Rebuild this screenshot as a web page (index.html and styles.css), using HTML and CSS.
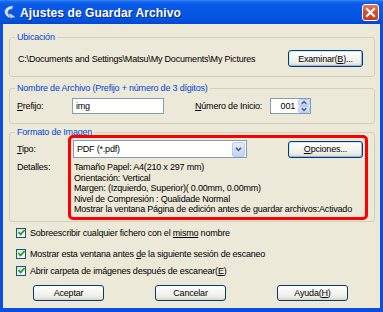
FILE: index.html
```html
<!DOCTYPE html>
<html lang="es">
<head>
<meta charset="utf-8">
<title>Ajustes de Guardar Archivo</title>
<link rel="stylesheet" href="styles.css">
</head>
<body>
<div class="window">
  <div class="titlebar">
    <svg class="appicon" viewBox="0 0 13 14" width="13" height="14">
      <path d="M10 1 C5 1 1 4 2 8 C2.5 10 4 11 5 12 L8 13 L5 9 C4 6 6 4 9 4 Z" fill="#e8ecf4" stroke="#8a97b5" stroke-width="0.6"/>
      <path d="M5 9 L8 13 L12 12 L8 9 Z" fill="#c9d0de" stroke="#8a97b5" stroke-width="0.6"/>
    </svg>
    <span class="title">Ajustes de Guardar Archivo</span>
    <span class="close">
      <svg viewBox="0 0 17 17" width="17" height="17">
        <path d="M5 5 L12 12 M12 5 L5 12" stroke="#fff" stroke-width="2.2" stroke-linecap="square"/>
      </svg>
    </span>
  </div>
  <div class="frame">
    <fieldset class="group g1">
      <legend>Ubicación</legend>
      <div class="row-ubic">
        <span class="path">C:\Documents and Settings\Matsu\My Documents\My Pictures</span>
        <button class="btn btn-side"><span>Examinar(<u>B</u>)...</span></button>
      </div>
    </fieldset>

    <fieldset class="group g2">
      <legend>Nombre de Archivo (Prefijo + número de 3 dígitos)</legend>
      <div class="row-name">
        <span class="lbl lbl-pref"><u>P</u>refijo:</span>
        <span class="input input-pref">img</span>
        <span class="lbl lbl-num"><u>N</u>úmero de Inicio:</span>
        <span class="input input-num">
          <span class="num-val">001</span>
          <span class="spin">
            <span class="spin-btn">
              <svg viewBox="0 0 11 7" width="11" height="7"><polyline points="3,5 5.5,2.5 8,5" fill="none" stroke="#4d6185" stroke-width="1.6"/></svg>
            </span>
            <span class="spin-btn">
              <svg viewBox="0 0 11 7" width="11" height="7"><polyline points="3,2 5.5,4.5 8,2" fill="none" stroke="#4d6185" stroke-width="1.6"/></svg>
            </span>
          </span>
        </span>
      </div>
    </fieldset>

    <fieldset class="group g3">
      <legend>Formato de Imagen</legend>
      <div class="fmt">
        <div class="row-tipo">
          <span class="lbl lbl-col"><u>T</u>ipo:</span>
          <span class="select">
            <span class="select-val">PDF (*.pdf)</span>
            <span class="select-arrow">
              <svg viewBox="0 0 13 16" width="13" height="16"><polyline points="3.5,6.5 6.5,9.5 9.5,6.5" fill="none" stroke="#4d6185" stroke-width="2"/></svg>
            </span>
          </span>
          <button class="btn btn-side btn-opc"><span><u>O</u>pciones...</span></button>
        </div>
        <div class="row-det">
          <span class="lbl lbl-col">Detalles:</span>
          <div class="det-lines">
            <div>Tamaño Papel: A4(210 x 297 mm)</div>
            <div>Orientación: Vertical</div>
            <div>Margen: (Izquierdo, Superior)( 0.00mm, 0.00mm)</div>
            <div>Nivel de Compresión : Qualidade Normal</div>
            <div>Mostrar la ventana Página de edición antes de guardar archivos:Activado</div>
          </div>
        </div>
        <div class="highlight"></div>
      </div>
    </fieldset>

    <div class="checks">
      <label class="chk chk1"><span class="box"><svg viewBox="0 0 9 9" width="9" height="9"><polyline points="1.5,4.2 3.6,6.4 7.6,2" fill="none" stroke="#21a121" stroke-width="1.8"/></svg></span><span>Sobreescribir cualquier fichero con el <u>mismo</u> nombre</span></label>
      <label class="chk chk2"><span class="box"><svg viewBox="0 0 9 9" width="9" height="9"><polyline points="1.5,4.2 3.6,6.4 7.6,2" fill="none" stroke="#21a121" stroke-width="1.8"/></svg></span><span>Mostrar esta ventana antes <u>d</u>e la siguiente sesión de escaneo</span></label>
      <label class="chk chk3"><span class="box"><svg viewBox="0 0 9 9" width="9" height="9"><polyline points="1.5,4.2 3.6,6.4 7.6,2" fill="none" stroke="#21a121" stroke-width="1.8"/></svg></span><span>Abrir carpeta de imágenes después de escanear(<u>E</u>)</span></label>
    </div>

    <div class="actions">
      <button class="btn btn-act"><span>Aceptar</span></button>
      <button class="btn btn-act"><span>Cancelar</span></button>
      <button class="btn btn-act"><span>Ayuda(<u>H</u>)</span></button>
    </div>
  </div>
</div>
</body>
</html>
```

FILE: styles.css
```css
html, body {
  margin: 0;
  padding: 0;
}
body {
  width: 383px;
  height: 312px;
  overflow: hidden;
  font-family: "Liberation Sans", Arial, sans-serif;
  font-size: 9px;
  letter-spacing: -0.2px;
  color: #000;
  background: #ece9d8;
  white-space: nowrap;
}
.window {
  width: 383px;
  height: 312px;
  display: flex;
  flex-direction: column;
}
.titlebar {
  height: 24px;
  flex: none;
  display: flex;
  align-items: center;
  box-sizing: border-box;
  padding: 0 4px 0 3px;
  background: linear-gradient(to bottom, #3d8cf7 0%, #1a6cf0 6%, #0a5ce8 16%, #0558e4 50%, #0454e0 80%, #0248cf 100%);
}
.appicon {
  flex: none;
  margin-right: 4px;
}
.title {
  flex: 1;
  color: #fff;
  font-weight: bold;
  font-size: 12px;
  letter-spacing: 0.1px;
  padding-top: 1px;
  text-shadow: 1px 1px 0 #0a2a8a;
}
.close {
  flex: none;
  width: 17px;
  height: 17px;
  box-sizing: border-box;
  border: 1px solid #fff;
  border-radius: 3px;
  background: linear-gradient(to bottom, #e8795d 0%, #d9502e 45%, #c8391b 100%);
  align-self: flex-start;
  margin-top: 4px;
  display: flex;
  align-items: center;
  justify-content: center;
}
.close svg {
  margin: -1px;
}
.frame {
  flex: 1;
  border-style: solid;
  border-color: #0a4fdc;
  border-width: 0 3px 4px 3px;
  background: #ece9d8;
  display: flex;
  flex-direction: column;
}
.group {
  margin: 0 5px 0 6px;
  padding: 0;
  border: 1px solid #d0d0bf;
  border-radius: 3px;
  min-width: 0;
}
.group legend {
  margin-left: 5px;
  padding: 0 2px;
  height: 11px;
  line-height: 11px;
  color: #0046d5;
}
.g1 { margin-top: 8px; }
.g2 { margin-top: 6px; }
.g3 { margin-top: 3px; }

.row-ubic {
  display: flex;
  align-items: center;
  justify-content: space-between;
  height: 17px;
  padding: 7px 11px 9px 8px;
}
.btn {
  font-family: inherit;
  font-size: 9px;
  letter-spacing: -0.2px;
  color: #000;
  box-sizing: border-box;
  border: 1px solid #003c74;
  border-radius: 3px;
  background: linear-gradient(to bottom, #ffffff 0%, #f5f4ef 45%, #ecebe4 80%, #d8d2c6 100%);
  padding: 0;
  display: flex;
  align-items: center;
  justify-content: center;
}
.btn-side {
  width: 75px;
  height: 17px;
  box-shadow: inset 1px 1px 0 #cee7ff, inset -1px -1px 0 #98b8ea;
}
.row-name {
  display: flex;
  align-items: center;
  height: 16px;
  padding: 4px 11px 9px 7px;
}
.lbl {
  flex: none;
}
.lbl-pref {
  width: 55px;
}
.input {
  box-sizing: border-box;
  height: 16px;
  border: 1px solid #7f9db9;
  background: #fff;
  display: flex;
  align-items: center;
}
.input-pref {
  width: 92px;
  padding-left: 3px;
}
.lbl-num {
  margin-left: 31px;
  width: 75px;
}
.input-num {
  width: 41px;
  justify-content: flex-end;
}
.num-val {
  padding-right: 3px;
}
.spin {
  width: 12px;
  height: 14px;
  display: flex;
  flex-direction: column;
}
.spin-btn {
  flex: 1;
  box-sizing: border-box;
  background: linear-gradient(to bottom, #dfe8fc, #c3d4fb);
  border: 1px solid #b8cbf6;
  border-radius: 2px;
  display: flex;
  align-items: center;
  justify-content: center;
  overflow: hidden;
}
.fmt {
  position: relative;
  padding: 2px 11px 6px 7px;
}
.row-tipo {
  display: flex;
  align-items: center;
  height: 18px;
}
.lbl-col {
  width: 56px;
}
.select {
  box-sizing: border-box;
  width: 174px;
  height: 18px;
  border: 1px solid #7f9db9;
  background: #fff;
  display: flex;
  align-items: center;
  padding: 0 1px 0 3px;
}
.select-val {
  flex: 1;
}
.select-arrow {
  width: 13px;
  height: 15px;
  box-sizing: border-box;
  border: 1px solid #b8cbf6;
  border-radius: 2px;
  background: linear-gradient(to bottom, #e3ebfd, #c1d3fb);
  display: flex;
  align-items: center;
  justify-content: center;
  overflow: hidden;
}
.btn-opc {
  margin-left: auto;
}
.row-det {
  display: flex;
  margin-top: 4px;
  line-height: 10.6px;
}
.lbl-col + .det-lines {
  margin-left: 1px;
}
.highlight {
  position: absolute;
  left: 58px;
  top: -3px;
  width: 300px;
  height: 85px;
  box-sizing: border-box;
  border: 3px solid #ff0000;
  border-radius: 5px;
  pointer-events: none;
}
.checks {
  display: flex;
  flex-direction: column;
  padding-left: 13px;
}
.chk {
  display: flex;
  align-items: center;
  height: 14px;
}
.chk1 { margin-top: 4px; }
.chk2 { margin-top: 7px; }
.chk3 { margin-top: 3px; }
.box {
  flex: none;
  width: 10px;
  height: 10px;
  box-sizing: border-box;
  border: 1px solid #1c5180;
  background: linear-gradient(135deg, #dcdcd7 0%, #f4f4f0 60%, #ffffff 100%);
  margin-right: 4px;
  display: flex;
  align-items: center;
  justify-content: center;
}
.box svg {
  margin: -1px;
}
.actions {
  display: flex;
  gap: 51px;
  padding-left: 30px;
  margin-top: 7px;
}
.btn-act {
  width: 71px;
  height: 16px;
}
```
